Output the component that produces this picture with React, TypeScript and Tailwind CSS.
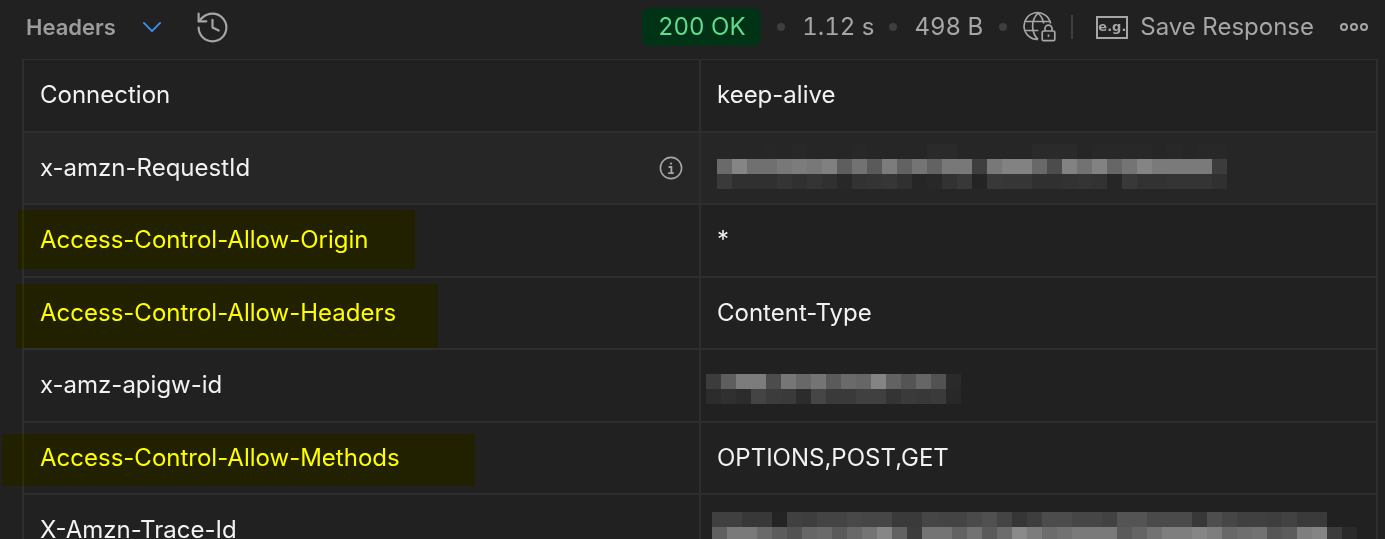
import { ChevronDown, History } from 'lucide-react';
import type { ReactNode } from 'react';

type Row = {
    name: string;
    value?: string;
    info?: boolean;
    marked?: boolean;
    shaded?: boolean;
    mosaic?: ReactNode;
};

const requestIdBlur = [
    ['26', '26', '26', '27', '26', '28', '26', '26', '26', '28', '26', '26', '26', '26', '2a', '2a', '26', '26', '26', '26', '26', '2a', '2a', '2a', '26', '28', '28', '28', '28', '26', '28', '26', '28', '28'],
    ['6a', '85', '70', '70', '78', '7c', '78', '80', '5e', '72', '5a', '7c', '62', '74', '62', '78', '78', '3e', '78', '82', '82', '68', '4c', '82', '72', '82', '66', '74', '84', '7a', '7a', '7a', '7a', '3c'],
    ['3a', '30', '30', '30', '34', '30', '34', '30', '28', '32', '34', '36', '30', '26', '28', '32', '38', '24', '38', '36', '36', '30', '30', '32', '34', '32', '26', '38', '32', '32', '34', '34', '34', '30'],
];

const apigwBlur = [
    ['3c', '5e', '7c', '7c', '4c', '76', '68', '74', '5a', '6a', '66', '84', '62', '54', '66', '52', '2a'],
    ['2c', '30', '2c', '44', '3c', '3a', '2c', '46', '3a', '3a', '40', '40', '34', '3a', '38', '3a', '28'],
];

const traceBlur = [
    ['40', '40', '38', '38', '24', '40', '3e', '44', '44', '48', '46', '46', '3a', '3a', '46', '44', '44', '4a', '50', '44', '36', '3e', '4c', '4c', '46', '46', '42', '54', '54', '4a', '4a', '4a', '38', '4e', '46', '40', '40', '3e', '42', '3a', '3a'],
    ['60', '7a', '7a', '6a', '5c', '52', '66', '6a', '5a', '68', '74', '86', '62', '3c', '74', '74', '62', '72', '5a', '6c', '8a', '7c', '6c', '72', '7a', '7a', '7a', '5a', '64', '72', '7e', '7e', '86', '7e', '68', '6e', '72', '56', '5c', '7e', '84', '3c', '2a'],
];

// pixelated secrets from the screenshot, one 15px square per entry
function Blur({ rows }: { rows: string[][] }) {
    return (
        <div className="flex flex-col">
            {rows.map((row, y) => (
                <div key={y} className="flex">
                    {row.map((shade, x) => (
                        <div
                            key={x}
                            className="h-[15px] w-[15px] shrink-0"
                            style={{ backgroundColor: `#${shade}${shade}${shade}` }}
                        />
                    ))}
                </div>
            ))}
        </div>
    );
}

const rows: Row[] = [
    { name: 'Connection', value: 'keep-alive' },
    {
        name: 'x-amzn-RequestId',
        info: true,
        shaded: true,
        mosaic: (
            <div className="pb-[2px]">
                <Blur rows={requestIdBlur} />
            </div>
        ),
    },
    { name: 'Access-Control-Allow-Origin', value: '*', marked: true },
    { name: 'Access-Control-Allow-Headers', value: 'Content-Type', marked: true },
    {
        name: 'x-amz-apigw-id',
        mosaic: (
            <div className="-ml-[11px] pt-[8px]">
                <Blur rows={apigwBlur} />
            </div>
        ),
    },
    { name: 'Access-Control-Allow-Methods', value: 'OPTIONS,POST,GET', marked: true },
    {
        name: 'X-Amzn-Trace-Id',
        mosaic: (
            <div className="-ml-[5px] pb-[6px]">
                <Blur rows={traceBlur} />
            </div>
        ),
    },
];

function InfoIcon() {
    return (
        <svg width="24" height="24" viewBox="0 0 24 24" fill="none" stroke="#a6a6a6" strokeWidth="1.6">
            <circle cx="12" cy="12" r="10.6" />
            <circle cx="12" cy="7.6" r="1.1" fill="#a6a6a6" stroke="none" />
            <path d="M9.6 11h2.8v6M9.2 17.2h5.6" strokeWidth="1.8" />
        </svg>
    );
}

function GlobeLockIcon() {
    return (
        <svg width="34" height="32" viewBox="0 0 34 32" fill="none" stroke="#a6a6a6" strokeWidth="1.7">
            <path d="M27.6 12.5A13.4 13.4 0 1 0 15 28.4" />
            <path d="M15 2C11.5 5.5 9.6 10 9.6 15.2s1.9 9.7 5.4 13.2" />
            <path d="M15 2c3.2 3 5.2 6.5 5.6 10.5" />
            <path d="M2.4 10.5h24M2.4 19.5h13" />
            <rect x="19.2" y="20" width="12.6" height="9.6" rx="1.4" />
            <path d="M22 20v-2.4a3.5 3.5 0 0 1 7 0V20" />
            <path d="M25.5 23.5v2.4" />
        </svg>
    );
}

function Dot() {
    return <div className="h-2 w-2 rounded-full bg-[#3e3e3e]" />;
}

export default function App() {
    return (
        <div className="relative h-[539px] w-[1385px] overflow-hidden bg-[#212121] font-['Inter',sans-serif] text-[24px]">
            <div className="flex h-[59px] items-center pb-[5px] pl-[26px] pr-[17px]">
                <span className="w-[113px] text-[22px] font-semibold text-[#9c9c9c]">Headers</span>
                <ChevronDown className="h-[26px] w-[26px] scale-125 text-[#3b8fe8]" strokeWidth={1.4} />
                <History className="ml-[29px] h-[37px] w-[37px] text-[#a6a6a6]" strokeWidth={1.4} />
                <div className="ml-auto flex items-center tabular-nums">
                    <div className="flex h-[38px] w-[119px] items-center justify-center rounded-[7px] bg-[#003215] text-[#5fdc8f]">
                        200 OK
                    </div>
                    <div className="ml-[16px]"><Dot /></div>
                    <span className="ml-[17px] text-[#a6a6a6]">1.12 s</span>
                    <div className="ml-[15px]"><Dot /></div>
                    <span className="ml-[17px] text-[#a6a6a6]">498 B</span>
                    <div className="ml-[16px]"><Dot /></div>
                    <div className="ml-[16px]"><GlobeLockIcon /></div>
                    <div className="ml-[14px] h-[24px] w-[2px] bg-[#3e3e3e]" />
                    <div className="ml-[23px] flex h-[23px] w-[32px] items-center justify-center border-2 border-[#a6a6a6] font-['DejaVu_Sans',sans-serif] text-[13px] font-bold text-[#a6a6a6]">
                        e.g.
                    </div>
                    <span className="ml-[12px] text-[#a6a6a6]">Save Response</span>
                    <div className="ml-[26px] flex gap-[2px]">
                        <div className="h-[8px] w-[8px] rounded-full border-2 border-[#a6a6a6]" />
                        <div className="h-[8px] w-[8px] rounded-full border-2 border-[#a6a6a6]" />
                        <div className="h-[8px] w-[8px] rounded-full border-2 border-[#a6a6a6]" />
                    </div>
                </div>
            </div>

            <div className="ml-[22px] mr-[7px] border-x-2 border-t border-[#2e2e2e]">
                {rows.map((row) => (
                    <div
                        key={row.name}
                        className={`flex h-[72.5px] border-b-2 border-[#2e2e2e] ${row.shaded ? 'bg-[#262626]' : ''}`}
                    >
                        <div className="flex w-[677px] shrink-0 items-center justify-between border-r-2 border-[#2e2e2e] px-[16px]">
                            <span className={row.marked ? 'text-[#ffff00]' : 'text-[#f2f2f2]'}>{row.name}</span>
                            {row.info ? <InfoIcon /> : null}
                        </div>
                        <div className="flex min-w-0 flex-1 items-center overflow-hidden pl-[16px] text-[#f2f2f2]">
                            {row.value}
                            {row.mosaic}
                        </div>
                    </div>
                ))}
            </div>

            {/* marker highlights someone drew over the screenshot */}
            <div className="pointer-events-none absolute left-[18px] top-[210px] h-[59px] w-[397px] bg-[#ffff00] mix-blend-multiply" />
            <div className="pointer-events-none absolute left-[16px] top-[284px] h-[64px] w-[422px] bg-[#ffff00] mix-blend-multiply" />
            <div className="pointer-events-none absolute left-[2px] top-[434px] h-[52px] w-[473px] bg-[#ffff00] mix-blend-multiply" />
        </div>
    );
}
